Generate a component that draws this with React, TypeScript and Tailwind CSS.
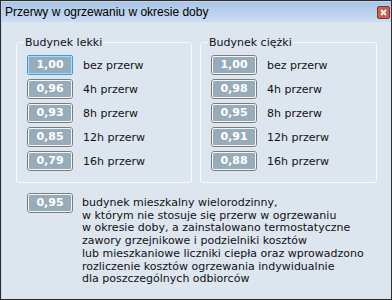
import React from "react";

type Row = { value: string; label: string };

const light: Row[] = [
  { value: "1,00", label: "bez przerw" },
  { value: "0,96", label: "4h przerw" },
  { value: "0,93", label: "8h przerw" },
  { value: "0,85", label: "12h przerw" },
  { value: "0,79", label: "16h przerw" },
];

const heavy: Row[] = [
  { value: "1,00", label: "bez przerw" },
  { value: "0,98", label: "4h przerw" },
  { value: "0,95", label: "8h przerw" },
  { value: "0,91", label: "12h przerw" },
  { value: "0,88", label: "16h przerw" },
];

function ValueButton({ value, focused }: { value: string; focused?: boolean }) {
  return (
    <div
      className={
        focused
          ? "w-[46px] h-[20px] shrink-0 rounded-[2px] border border-[#3a9de0] p-0"
          : "w-[46px] h-[20px] shrink-0 rounded-[3px] border border-[#7c7c7c]"
      }
    >
      <div
        className={
          focused
            ? "h-full w-full border border-[#a6dcf6] bg-[#97acbb] flex items-center justify-center text-white font-bold"
            : "h-full w-full rounded-[2px] border border-[#f3f5f7] bg-[#97acbb] flex items-center justify-center text-white font-bold"
        }
      >
        {value}
      </div>
    </div>
  );
}

function Group({ title, rows, focusFirst, width }: { title: string; rows: Row[]; focusFirst?: boolean; width: string }) {
  return (
    <fieldset className={`${width} rounded-[3px] border border-[#f7f9fb] pl-[10px] pt-[6px] pb-[11px]`}>
      <legend className="ml-[-3px] px-[1px] leading-[13px]">{title}</legend>
      <div className="flex flex-col gap-[4px]">
        {rows.map((r, i) => (
          <div key={r.label} className="flex items-center gap-[10px]">
            <ValueButton value={r.value} focused={focusFirst && i === 0} />
            <span className="leading-[13px]">{r.label}</span>
          </div>
        ))}
      </div>
    </fieldset>
  );
}

export default function App() {
  return (
    <div
      className="w-[392px] h-[300px] border border-[#2e2e2e] text-[11px] text-[#111]"
      style={{ fontFamily: '"DejaVu Sans", sans-serif' }}
    >
      <div className="h-full flex flex-col border-l border-t border-[#c6d4e4] border-r-[#4fb7ea] border-b-[#4fb7ea]">
        <div className="h-[20px] shrink-0 flex items-center justify-between pl-[3px] pr-[1px] bg-gradient-to-b from-[#a9c6e6] to-[#cbddf1]">
          <span
            className="text-[12px] text-black"
            style={{ fontFamily: '"Liberation Sans", sans-serif' }}
          >
            Przerwy w ogrzewaniu w okresie doby
          </span>
          <span className="w-[13px] h-[13px] rounded-[2px] border border-[#7a3a30] bg-[#c8604f] flex items-center justify-center">
            <svg width="7" height="7" viewBox="0 0 7 7">
              <path d="M1 1L6 6M6 1L1 6" stroke="#fff" strokeWidth="1.8" />
            </svg>
          </span>
        </div>
        <div className="flex-1 bg-[#dde5ef] pt-[14px]">
          <div className="flex gap-[8px] pl-[14px]">
            <Group title="Budynek lekki" rows={light} focusFirst width="w-[176px]" />
            <Group title="Budynek ciężki" rows={heavy} width="w-[177px]" />
          </div>
          <div className="flex gap-[9px] pl-[25px] mt-[10px]">
            <ValueButton value="0,95" />
            <div className="mt-[4px] leading-[12.7px]">
              budynek mieszkalny wielorodzinny,
              <br />w którym nie stosuje się przerw w ogrzewaniu
              <br />w okresie doby, a zainstalowano termostatyczne
              <br />zawory grzejnikowe i podzielniki kosztów
              <br />lub mieszkaniowe liczniki ciepła oraz wprowadzono
              <br />rozliczenie kosztów ogrzewania indywidualnie
              <br />dla poszczególnych odbiorców
            </div>
          </div>
        </div>
      </div>
    </div>
  );
}
